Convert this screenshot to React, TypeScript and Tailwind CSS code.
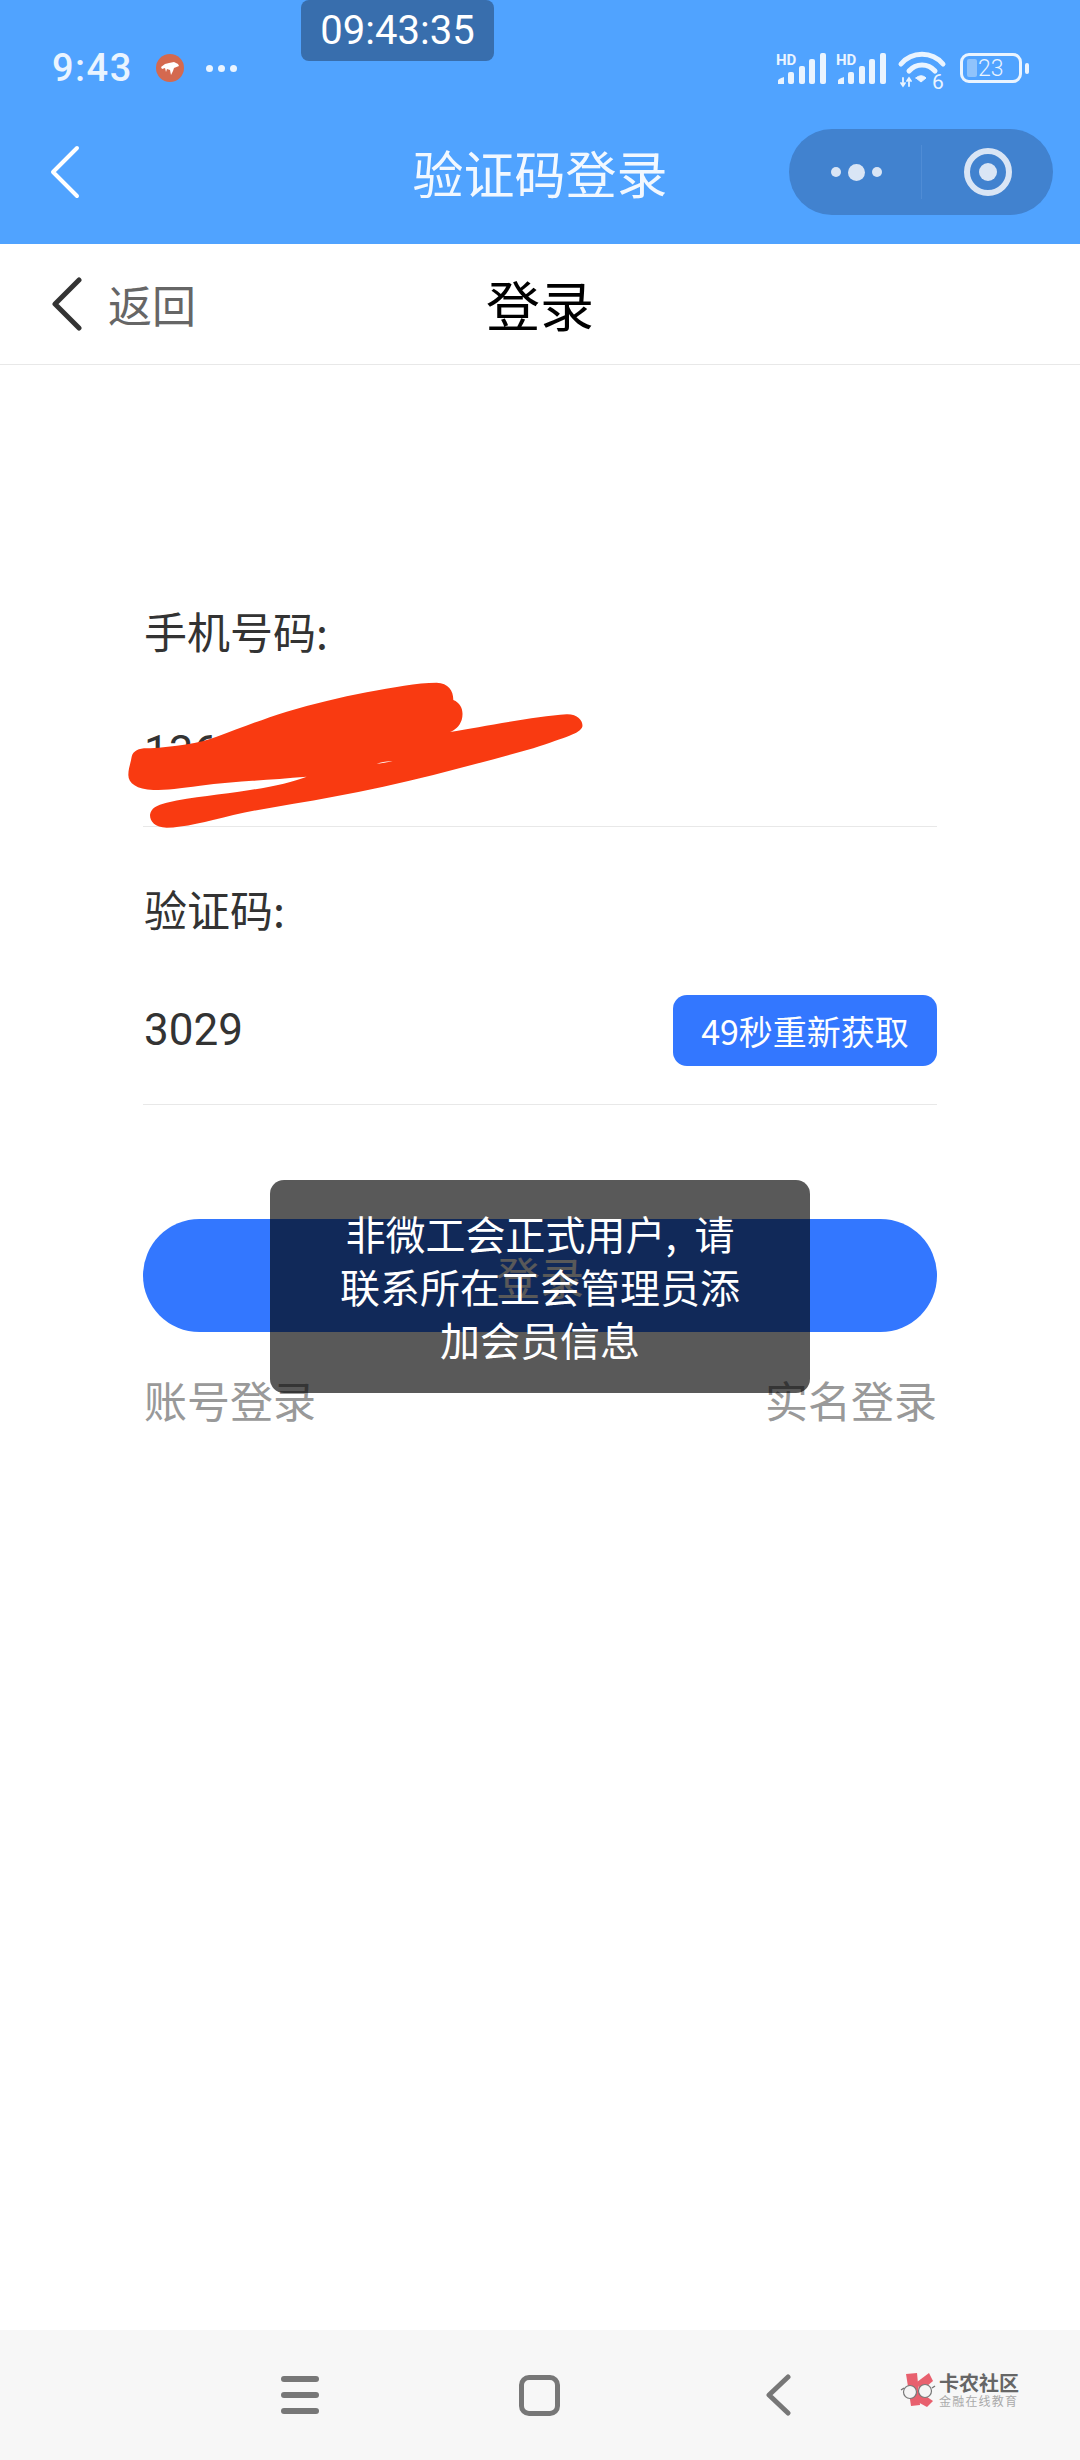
const SignalIcon = () => (
  <svg width="50" height="34" viewBox="0 0 50 34" fill="#eaf4ff">
    <text x="0" y="14" fontSize="15" fontWeight="700" fontFamily="Roboto, sans-serif">HD</text>
    <path d="M2 33V30C2 28 5 27 8 26V33Z" />
    <rect x="12" y="21" width="6" height="12" rx="2" />
    <rect x="23" y="15" width="6" height="18" rx="2" />
    <rect x="33" y="8" width="6" height="25" rx="2" />
    <rect x="44" y="2" width="6" height="31" rx="2" />
  </svg>
);

const WifiIcon = () => (
  <svg width="50" height="48" viewBox="0 -6 50 48" fill="none" stroke="#eaf4ff" strokeLinecap="round" className="overflow-visible">
    <path d="M3 14C14 1 34 1 45 14" strokeWidth="5" />
    <path d="M11 21C18 13 30 13 37 21" strokeWidth="5" />
    <path d="M18 28L23 32L28 28C25 25 21 25 18 28Z" fill="#eaf4ff" strokeWidth="1" />
    <path d="M5 36V28M3 33L5 36L7 33M11 36V28M9 31L11 28L13 31" strokeWidth="1.8" />
    <text x="34" y="39" fontSize="21" fill="#eaf4ff" stroke="none" fontFamily="Roboto, sans-serif">6</text>
  </svg>
);

const BatteryIcon = () => (
  <div className="flex items-center">
    <div className="flex h-[30px] w-[62px] items-center rounded-[9px] border-[3px] border-[#eaf4ff] pl-[4px]">
      <div className="h-[18px] w-[10px] rounded-[2px] bg-[#8fc3fb]" />
      <span className="ml-[1px] font-['Roboto'] text-[23px] font-light leading-none text-[#eaf4ff]">23</span>
    </div>
    <div className="ml-[3px] h-[11px] w-[4px] rounded-[2px] bg-[#eaf4ff]" />
  </div>
);

const Chevron = ({ color, width }: { color: string; width: number }) => (
  <svg width="30" height="54" viewBox="0 0 30 54" fill="none" stroke={color} strokeWidth={width} strokeLinecap="round" strokeLinejoin="round">
    <path d="M27 3L3 27L27 51" />
  </svg>
);

const Scribble = () => (
  <svg className="absolute left-[100px] top-[580px]" width="520" height="300" viewBox="0 0 1560 900">
    <path
      fill="#f93a11"
      d="M95 530C100 510 120 503 150 505C220 500 300 490 350 470C420 445 480 420 560 395C640 372 720 352 800 337C880 322 950 308 1010 308C1045 310 1060 330 1060 360C1085 370 1092 395 1085 420C1078 440 1065 450 1050 456C1150 440 1300 410 1400 403C1435 402 1450 425 1447 440C1440 460 1400 470 1300 505C1200 532 1100 560 1000 585C900 610 800 632 700 650C600 670 500 682 400 705C320 725 250 743 200 743C165 742 150 725 150 705C152 685 170 675 200 668C280 650 360 645 450 630C520 620 580 605 620 590C500 600 400 605 300 617C240 625 200 630 160 630C110 628 85 610 85 585C85 565 92 550 95 530Z"
    />
    <path fill="#ffffff" d="M830 552C845 546 860 543 878 544C860 547 845 550 830 552Z" />
  </svg>
);

const KanongLogo = () => (
  <div className="flex items-center">
    <svg width="36" height="34" viewBox="0 0 36 34">
      <path d="M6 1L17 0L20 32L11 33Z" fill="#e8606e" />
      <path d="M17 9L29 0L33 8L20 19Z" fill="#e8606e" />
      <path d="M17 17L33 28L27 34L14 27Z" fill="#e8606e" />
      <path d="M1 17L4 15M32 15L35 13" stroke="#777777" strokeWidth="1.5" />
      <circle cx="10" cy="19" r="6.5" fill="#f5f5f5" stroke="#777777" strokeWidth="1.2" />
      <circle cx="25" cy="18" r="6.5" fill="#f5f5f5" stroke="#777777" strokeWidth="1.2" />
    </svg>
    <div className="ml-[3px] flex flex-col">
      <span className="text-[20px] font-bold leading-[21px] text-[#666666]">卡农社区</span>
      <span className="text-[12px] leading-[15px] tracking-[1.2px] text-[#aaaaaa]">金融在线教育</span>
    </div>
  </div>
);

const App = () => {
  return (
    <div className="relative flex h-[2460px] w-[1080px] flex-col overflow-hidden bg-white font-['Noto_Sans_CJK_SC','Noto_Sans',sans-serif]">
      <header className="h-[244px] bg-[#50a3ff] pt-[50px] text-white">
        <div className="flex h-[36px] items-center justify-between pl-[52px] pr-[51px]">
          <div className="flex items-center">
            <span className="font-['Roboto'] text-[38px] font-medium leading-none tracking-[1.5px] text-[#eaf4ff]">9:43</span>
            <div className="ml-[23px] flex h-[28px] w-[28px] items-center justify-center rounded-full bg-[#d4694f]">
              <svg width="18" height="13" viewBox="0 0 18 13" fill="#ffffff">
                <path d="M0 5L4 2L8 1L13 0L17 2L18 4L13 6L12 9L10 13L9 8L6 7L5 10L4 6L1 7Z" />
              </svg>
            </div>
            <div className="ml-[22px] flex gap-[5px]">
              <div className="h-[7px] w-[7px] rounded-full bg-[#eaf4ff]" />
              <div className="h-[7px] w-[7px] rounded-full bg-[#eaf4ff]" />
              <div className="h-[7px] w-[7px] rounded-full bg-[#eaf4ff]" />
            </div>
          </div>
          <div className="flex items-center gap-[10px]">
            <SignalIcon />
            <SignalIcon />
            <div className="mx-[2px]">
              <WifiIcon />
            </div>
            <BatteryIcon />
          </div>
        </div>
        <div className="mt-[43px] grid h-[86px] grid-cols-[minmax(0,1fr)_auto_minmax(0,1fr)] items-center px-[27px]">
          <div className="ml-[23px]">
            <Chevron color="#ffffff" width={4} />
          </div>
          <span className="text-[51px] leading-none text-[#f2f8ff]">验证码登录</span>
          <div className="flex h-[86px] w-[264px] items-center justify-self-end rounded-full bg-[#4182cf]">
            <div className="flex w-[132px] items-center justify-center gap-[7px] pl-[2px]">
              <div className="h-[10px] w-[10px] rounded-full bg-[#d9e5f5]" />
              <div className="h-[17px] w-[17px] rounded-full bg-[#d9e5f5]" />
              <div className="h-[10px] w-[10px] rounded-full bg-[#d9e5f5]" />
            </div>
            <div className="h-[54px] w-px bg-[#4f8cd5]" />
            <div className="flex flex-1 items-center justify-center">
              <div className="flex h-[48px] w-[48px] items-center justify-center rounded-full border-[6px] border-[#d9e5f5]">
                <div className="h-[18px] w-[18px] rounded-full bg-[#d9e5f5]" />
              </div>
            </div>
          </div>
        </div>
      </header>

      <div className="grid h-[121px] grid-cols-[minmax(0,1fr)_auto_minmax(0,1fr)] items-center border-b border-[#e8e8e8] px-[52px]">
        <div className="flex items-center">
          <Chevron color="#333333" width={5} />
          <span className="ml-[26px] text-[44px] leading-none text-[#666666]">返回</span>
        </div>
        <span className="text-[54px] leading-none text-black">登录</span>
        <div />
      </div>

      <main className="flex flex-col px-[143px] pt-[235px]">
        <label className="h-[60px] pl-px text-[43px] leading-[60px] text-[#333333]">手机号码:</label>
        <div className="mt-[32px] flex h-[120px] items-center pl-px font-['Roboto'] text-[44px] text-[#333333]">136</div>
        <div className="mt-[14px] h-px bg-[#e8e8e8]" />

        <label className="mt-[51px] h-[60px] pl-px text-[43px] leading-[60px] text-[#333333]">验证码:</label>
        <div className="mt-[32px] flex h-[120px] items-center justify-between pl-px">
          <span className="font-['Roboto'] text-[44px] text-[#333333]">3029</span>
          <button className="flex h-[71px] w-[264px] items-center justify-center rounded-[14px] bg-[#3377ff] text-[34px] text-white">
            49秒重新获取
          </button>
        </div>
        <div className="mt-[14px] h-px bg-[#e8e8e8]" />

        <button className="mt-[114px] flex h-[113px] items-center justify-center rounded-full bg-[#3377ff] text-[44px] text-white">
          登录
        </button>
        <div className="mt-[37px] flex h-[60px] items-center justify-between pl-px text-[43px] leading-none text-[#999999]">
          <span>账号登录</span>
          <span>实名登录</span>
        </div>
      </main>

      <Scribble />

      <div className="absolute left-[270px] top-[1180px] flex h-[213px] w-[540px] items-center justify-center rounded-[14px] bg-black/65 px-[68px] text-center text-[40px] leading-[53px] text-white">
        非微工会正式用户,&nbsp; 请联系所在工会管理员添加会员信息
      </div>

      <div className="absolute left-[301px] top-0 flex h-[61px] w-[193px] items-center justify-center rounded-[8px] bg-[#386ead] font-['Roboto'] text-[40px] text-white">
        09:43:35
      </div>

      <nav className="mt-auto flex h-[130px] items-center bg-[#f7f7f7] pl-[281px]">
        <div className="flex w-[38px] flex-col gap-[10px]">
          <div className="h-[6px] rounded-full bg-[#777777]" />
          <div className="h-[6px] rounded-full bg-[#777777]" />
          <div className="h-[6px] rounded-full bg-[#777777]" />
        </div>
        <div className="ml-[200px] h-[41px] w-[41px] rounded-[10px] border-[5px] border-[#777777]" />
        <svg className="ml-[206px]" width="25" height="42" viewBox="0 0 25 42" fill="none" stroke="#777777" strokeWidth="5" strokeLinecap="round" strokeLinejoin="round">
          <path d="M22 3L3 21L22 39" />
        </svg>
        <div className="ml-[109px] mt-[-10px]">
          <KanongLogo />
        </div>
      </nav>
    </div>
  );
};

export default App;
